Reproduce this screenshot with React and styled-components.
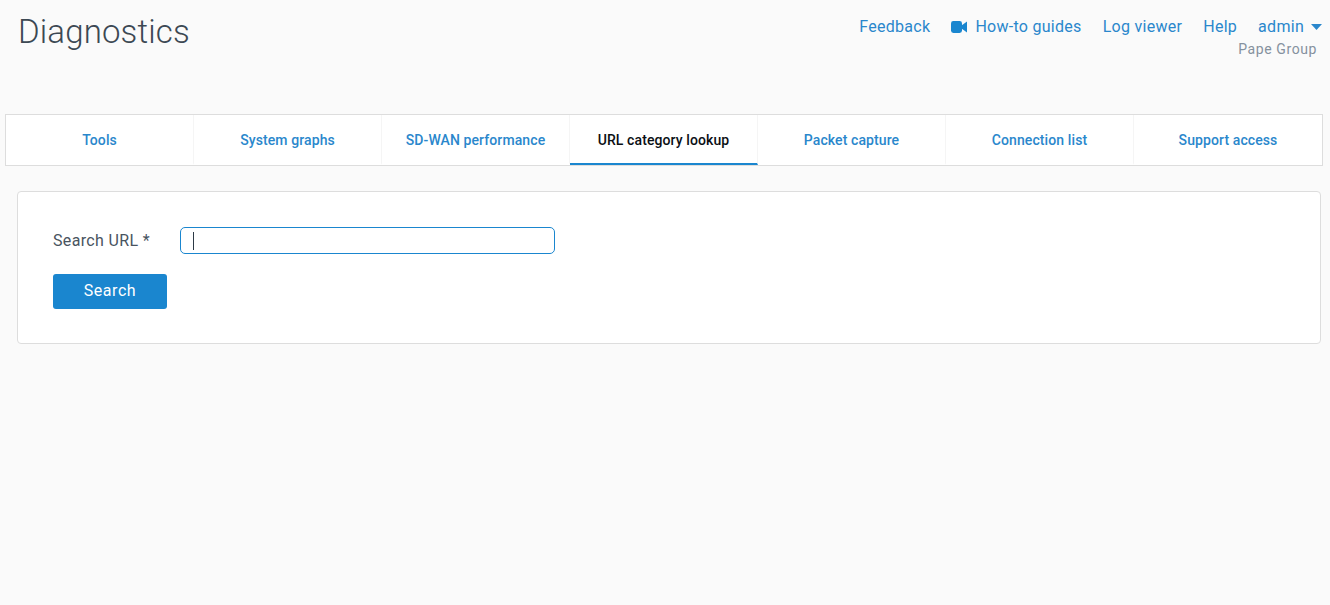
import React from 'react';
import styled, { createGlobalStyle } from 'styled-components';

const Global = createGlobalStyle`
  html, body { margin: 0; padding: 0; background: #fafafa; }
  body { font-family: Roboto, "Liberation Sans", sans-serif; width: 1330px; height: 605px; overflow: hidden; }
`;
const Page = styled.div`display: flex; flex-direction: column; height: 605px;`;
const Header = styled.header`
  display: flex; justify-content: space-between; align-items: flex-start;
  height: 114px; padding: 0 8px 0 18px; box-sizing: border-box;
`;
const Title = styled.h1`
  margin: 12px 0 0; font-size: 33px; line-height: 40px; font-weight: 300; color: #3c4853; letter-spacing: 0.15px;
`;
const TopRight = styled.div`display: flex; flex-direction: column; align-items: flex-end; padding-top: 16px;`;
const Nav = styled.nav`display: flex; gap: 21px; align-items: center;`;
const NavLink = styled.a`
  display: flex; align-items: center; gap: ${p => p.$gap || 7}px;
  font-size: 16px; line-height: 21px; color: #2a87cc; letter-spacing: 0.28px;
`;
const Org = styled.div`
  font-size: 14px; line-height: 18px; margin: 3px 5px 0 0; color: #85919e; letter-spacing: 0.6px;
`;
const Tabs = styled.div`
  display: flex; margin-left: 5px; width: 1318px; height: 52px; box-sizing: border-box;
  background: #fff; border: 1px solid #dddddd;
`;
const Tab = styled.div`
  width: 188px; flex: none; display: flex; align-items: center; justify-content: center;
  box-sizing: border-box; padding-top: 2px;
  font-size: 14px; font-weight: 500; letter-spacing: 0.1px;
  color: ${p => (p.$active ? '#0b0f14' : '#2a87cc')};
  border-right: ${p => (p.$last ? 'none' : '1px solid #f5f5f5')};
  border-bottom: 2px solid ${p => (p.$active ? '#1a86cf' : 'transparent')};
`;
const Panel = styled.section`
  margin: 25px 0 0 17px; width: 1304px; height: 153px; box-sizing: border-box;
  background: #fff; border: 1px solid #dddddd; border-radius: 4px;
  padding: 35px 35px 0;
`;
const Row = styled.div`display: flex; align-items: center; height: 27px;`;
const Label = styled.label`width: 127px; flex: none; font-size: 16px; color: #49545f; letter-spacing: 0.35px;`;
const InputBox = styled.div`
  width: 375px; height: 27px; box-sizing: border-box;
  border: 1px solid #1a86cf; border-radius: 5px; background: #fff;
  display: flex; align-items: center; padding-left: 12px;
`;
const Caret = styled.span`display: block; width: 1px; height: 18px; background: #2d3a46;`;
const Button = styled.button`
  display: block; margin-top: 20px; width: 114px; height: 35px; padding: 0 0 3px;
  border: none; border-radius: 3px; background: #1a86cf; color: #fff;
  font: 400 16px Roboto, sans-serif; letter-spacing: 0.55px;
`;
const VideoIcon = () => (
  <svg width="16" height="12" viewBox="0 0 16 12" aria-hidden="true">
    <rect x="0" y="0" width="11" height="12" rx="2.4" fill="#1a86cf" />
    <path d="M10.5 4.4 16 0.6V11.4L10.5 7.6Z" fill="#1a86cf" />
  </svg>
);
const Arrow = () => (
  <svg width="11" height="6" viewBox="0 0 11 6" aria-hidden="true"><path d="M0 0H11L5.5 6Z" fill="#2a87cc" /></svg>
);
const tabs = ['Tools', 'System graphs', 'SD-WAN performance', 'URL category lookup', 'Packet capture', 'Connection list', 'Support access'];

export default function App() {
  return (
    <Page>
      <Global />
      <Header>
        <Title>Diagnostics</Title>
        <TopRight>
          <Nav>
            <NavLink>Feedback</NavLink>
            <NavLink $gap={8}><VideoIcon />How-to guides</NavLink>
            <NavLink>Log viewer</NavLink>
            <NavLink>Help</NavLink>
            <NavLink>admin<Arrow /></NavLink>
          </Nav>
          <Org>Pape Group</Org>
        </TopRight>
      </Header>
      <Tabs>
        {tabs.map((t, i) => (
          <Tab key={t} $active={i === 3} $last={i === 6}>{t}</Tab>
        ))}
      </Tabs>
      <Panel>
        <Row>
          <Label>Search URL *</Label>
          <InputBox><Caret /></InputBox>
        </Row>
        <Button>Search</Button>
      </Panel>
    </Page>
  );
}
